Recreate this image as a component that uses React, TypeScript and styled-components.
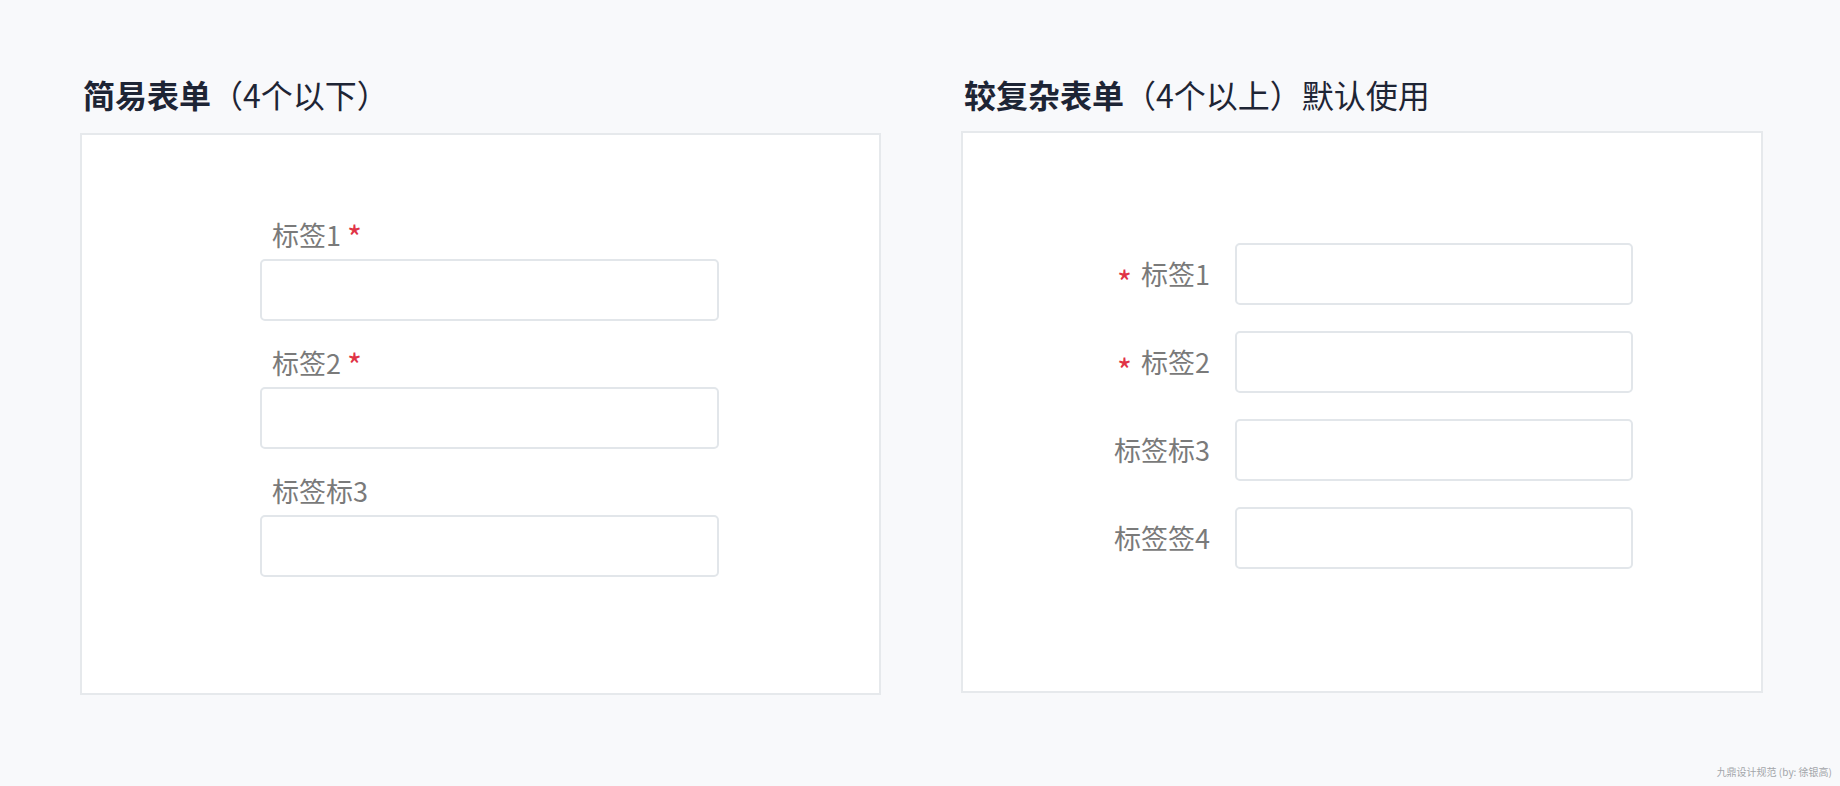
import React from "react";
import styled, { createGlobalStyle } from "styled-components";

const GlobalStyle = createGlobalStyle`
  html, body {
    margin: 0;
    padding: 0;
    background: #f8f9fb;
  }
  * { box-sizing: border-box; }
  body {
    font-family: "Noto Sans CJK SC", "Noto Sans", sans-serif;
  }
`;

const Page = styled.div`
  width: 1840px;
  height: 786px;
  display: flex;
  flex-direction: column;
  background: #f8f9fb;
`;

const Main = styled.main`
  display: grid;
  grid-template-columns: 801px 802px;
  column-gap: 80px;
  padding: 74px 0 0 80px;
`;

const Column = styled.section`
  display: flex;
  flex-direction: column;
`;

const Title = styled.h2<{ $gap: number }>`
  margin: 0 0 ${(p) => p.$gap}px 3px;
  font-size: 32px;
  line-height: 40px;
  height: 40px;
  font-weight: 400;
  color: #1e2535;
  white-space: nowrap;
`;

const Strong = styled.span`
  font-weight: 600;
`;

const Card = styled.div`
  height: 562px;
  background: #ffffff;
  border: 2px solid #e6e9ec;
`;

const StackForm = styled.div`
  display: flex;
  flex-direction: column;
  gap: 27px;
  padding: 85px 0 0 178px;
`;

const Group = styled.div`
  display: flex;
  flex-direction: column;
  gap: 9px;
`;

const TopLabel = styled.label`
  display: flex;
  align-items: flex-start;
  padding-left: 12px;
  font-size: 27px;
  line-height: 30px;
  height: 30px;
  color: #7a7a7a;
`;

const Star = styled.span<{ $centered?: boolean }>`
  color: #e03346;
  font-size: 32px;
  line-height: 30px;
  margin: ${(p) => (p.$centered ? "0 9px 0 0" : "0 0 0 6px")};
  transform: translateY(${(p) => (p.$centered ? "7px" : "1px")});
  display: inline-block;
`;

const Input = styled.div<{ $width: number }>`
  width: ${(p) => p.$width}px;
  height: 62px;
  background: #ffffff;
  border: 2px solid #e2e6ea;
  border-radius: 5px;
`;

const InlineForm = styled.div`
  display: flex;
  flex-direction: column;
  gap: 26px;
  padding: 110px 0 0 105px;
`;

const Row = styled.div`
  display: flex;
  align-items: center;
  gap: 25px;
`;

const SideLabel = styled.label`
  width: 142px;
  display: flex;
  justify-content: flex-end;
  align-items: center;
  font-size: 27px;
  line-height: 30px;
  color: #7a7a7a;
  white-space: nowrap;
`;

const Footer = styled.footer`
  margin-top: auto;
  padding: 0 8px 7px 0;
  text-align: right;
  font-size: 10px;
  line-height: 14px;
  color: #a3a6aa;
`;

const simple = [
  { label: "标签1", required: true },
  { label: "标签2", required: true },
  { label: "标签标3", required: false },
];

const complex = [
  { label: "标签1", required: true },
  { label: "标签2", required: true },
  { label: "标签标3", required: false },
  { label: "标签签4", required: false },
];

export default function App() {
  return (
    <Page>
      <GlobalStyle />
      <Main>
        <Column>
          <Title $gap={19}>
            <Strong>简易表单</Strong>（4个以下）
          </Title>
          <Card>
            <StackForm>
              {simple.map((f) => (
                <Group key={f.label}>
                  <TopLabel>
                    {f.label}
                    {f.required && <Star>*</Star>}
                  </TopLabel>
                  <Input $width={459} />
                </Group>
              ))}
            </StackForm>
          </Card>
        </Column>
        <Column>
          <Title $gap={17}>
            <Strong>较复杂表单</Strong>（4个以上）默认使用
          </Title>
          <Card>
            <InlineForm>
              {complex.map((f) => (
                <Row key={f.label}>
                  <SideLabel>
                    {f.required && <Star $centered>*</Star>}
                    {f.label}
                  </SideLabel>
                  <Input $width={398} />
                </Row>
              ))}
            </InlineForm>
          </Card>
        </Column>
      </Main>
      <Footer>九鼎设计规范 (by: 徐银高)</Footer>
    </Page>
  );
}
